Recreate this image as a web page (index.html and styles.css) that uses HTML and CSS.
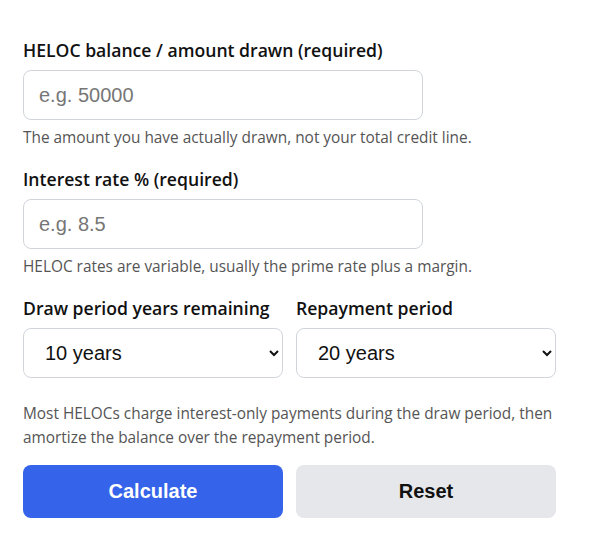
FILE: index.html
```html
<!DOCTYPE html>
<html lang="en">
<head>
    <meta charset="UTF-8">
    <meta name="viewport" content="width=device-width, initial-scale=1.0">
    <title>HELOC Payment Calculator</title>
    <link rel="stylesheet" href="styles.css">
</head>
<body>
    <form class="calc-form">
        <div class="field">
            <label for="balance">HELOC balance / amount drawn (required)</label>
            <input type="text" id="balance" class="text-input" placeholder="e.g. 50000">
            <p class="help">The amount you have actually drawn, not your total credit line.</p>
        </div>

        <div class="field">
            <label for="rate">Interest rate % (required)</label>
            <input type="text" id="rate" class="text-input" placeholder="e.g. 8.5">
            <p class="help">HELOC rates are variable, usually the prime rate plus a margin.</p>
        </div>

        <div class="row">
            <div class="col">
                <label for="draw">Draw period years remaining</label>
                <select id="draw" class="select-input">
                    <option>5 years</option>
                    <option selected>10 years</option>
                    <option>15 years</option>
                </select>
            </div>
            <div class="col">
                <label for="repay">Repayment period</label>
                <select id="repay" class="select-input">
                    <option>10 years</option>
                    <option>15 years</option>
                    <option selected>20 years</option>
                </select>
            </div>
        </div>

        <p class="help note">Most HELOCs charge interest-only payments during the draw period, then amortize the balance over the repayment period.</p>

        <div class="actions">
            <button type="button" class="btn btn-primary">Calculate</button>
            <button type="reset" class="btn btn-secondary">Reset</button>
        </div>
    </form>
</body>
</html>
```

FILE: styles.css
```css
* {
    box-sizing: border-box;
}

body {
    margin: 0;
    background: #ffffff;
    font-family: "Open Sans", "Noto Sans", sans-serif;
    color: #111111;
}

.calc-form {
    width: 533px;
    margin-left: 23px;
    padding-top: 38px;
}

.field {
    margin-bottom: 19px;
}

label {
    display: block;
    font-size: 17.6px;
    font-weight: 600;
    line-height: 24px;
    margin-bottom: 8px;
    color: #111111;
}

.text-input,
.select-input {
    display: block;
    width: 100%;
    height: 50px;
    border: 1px solid #d1d5db;
    border-radius: 8px;
    background: #ffffff;
    font-family: "Liberation Sans", Arial, sans-serif;
    font-size: 20px;
    color: #111111;
}

.text-input {
    max-width: 400px;
    padding: 0 15px;
}

.text-input::placeholder {
    color: #767676;
}

.select-input {
    padding: 0 6px 0 17px;
}

.help {
    margin: 8px 0 0;
    font-size: 15.4px;
    line-height: 20px;
    color: #555555;
}

.row {
    display: grid;
    grid-template-columns: 1fr 1fr;
    gap: 13px;
}

.help.note {
    margin-top: 24px;
    line-height: 24px;
}

.actions {
    display: grid;
    grid-template-columns: 1fr 1fr;
    gap: 13px;
    margin-top: 15px;
}

.btn {
    height: 53px;
    border: none;
    border-radius: 8px;
    font-family: "Liberation Sans", Arial, sans-serif;
    font-size: 20px;
    font-weight: 700;
    cursor: pointer;
}

.btn-primary {
    background: #3563e9;
    color: #ffffff;
}

.btn-secondary {
    background: #e5e7eb;
    color: #111111;
}
```
